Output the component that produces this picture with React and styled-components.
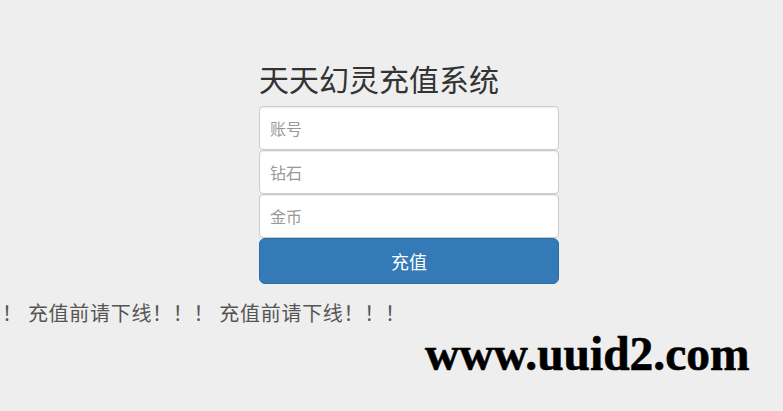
import React from 'react'
import styled, { createGlobalStyle } from 'styled-components'

const GlobalStyle = createGlobalStyle`
  html, body {
    margin: 0;
    padding: 0;
    background: #eeeeee;
  }
  body {
    font-family: "Noto Sans CJK SC", "Liberation Sans", sans-serif;
    color: #333;
    overflow: hidden;
  }
`

const Page = styled.div`
  position: relative;
  width: 783px;
  height: 411px;
  padding-top: 60px;
  box-sizing: border-box;
`

const Form = styled.form`
  width: 300px;
  margin-left: 259px;
  display: flex;
  flex-direction: column;
`

const Heading = styled.h2`
  margin: 0 0 10px;
  font-size: 30px;
  font-weight: 400;
  line-height: 36px;
  color: #333;
`

const Input = styled.input`
  box-sizing: border-box;
  height: 44px;
  width: 100%;
  padding: 10px;
  font-size: 16px;
  font-family: "Noto Sans CJK SC", "Liberation Sans", sans-serif;
  color: #555;
  background: #fff;
  border: 1px solid #ccc;
  border-radius: 4px;
  box-shadow: inset 0 1px 1px rgba(0, 0, 0, 0.075);
  outline: none;
  &::placeholder {
    color: #999;
  }
`

const Button = styled.button`
  box-sizing: border-box;
  height: 46px;
  width: 100%;
  font-size: 18px;
  font-family: "Noto Sans CJK SC", "Liberation Sans", sans-serif;
  color: #fff;
  background: #337ab7;
  border: 1px solid #2e6da4;
  border-radius: 6px;
  cursor: pointer;
`

const Marquee = styled.div`
  margin-top: 15px;
  white-space: nowrap;
  overflow: hidden;
  font-size: 20px;
  line-height: 28px;
  letter-spacing: 0.7px;
  color: #555;
  padding-left: 2px;
`

const Watermark = styled.div`
  position: absolute;
  left: 425px;
  top: 329px;
  font-family: "Liberation Serif", serif;
  font-weight: 700;
  font-size: 47.5px;
  line-height: 50px;
  color: #000;
  -webkit-text-stroke: 0.6px #000;
`

export default function App() {
  return (
    <Page>
      <GlobalStyle />
      <Form onSubmit={e => e.preventDefault()}>
        <Heading>天天幻灵充值系统</Heading>
        <Input placeholder="账号" />
        <Input placeholder="钻石" />
        <Input placeholder="金币" />
        <Button type="submit">充值</Button>
      </Form>
      <Marquee>！ 充值前请下线！！！ 充值前请下线！！！</Marquee>
      <Watermark>www.uuid2.com</Watermark>
    </Page>
  )
}
